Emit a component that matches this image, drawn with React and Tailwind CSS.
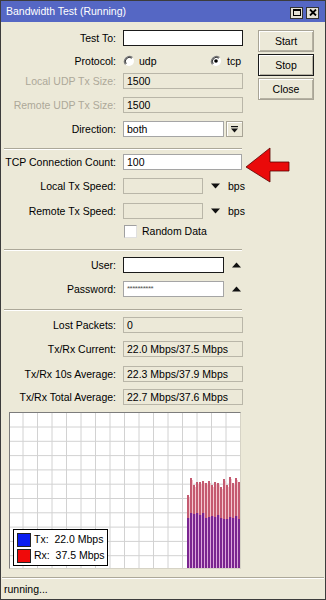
import React from 'react';

const FONT = { fontFamily: '"Liberation Sans", Arial, sans-serif' };

const rxTops = [82, 65, 72, 69, 69, 68, 70, 68, 72, 69, 70, 74, 66, 72, 64, 70, 65, 69];
const txTops = [105, 100, 101, 100, 102, 100, 105, 104, 103, 104, 102, 105, 106, 106, 104, 105, 103, 106];

const Label = ({ children, disabled }) => (
  <div className={`w-[116px] shrink-0 text-right pr-[1px] ${disabled ? 'text-[#aca899]' : 'text-black'}`}>
    {children}
  </div>
);

const Field = ({ value, variant = 'white', w = 'w-[120px]', small }) => {
  const styles = {
    white: 'bg-white border-[#a5a5a5]',
    focus: 'bg-white border-[#1a1a1a]',
    disabled: 'bg-[#ece9d8] border-[#b9b6a8]',
  };
  return (
    <div
      className={`${w} shrink-0 h-[16px] border ${styles[variant]} flex items-center pl-[3px] ${small ? 'text-[8px] text-[#555] tracking-[-0.5px]' : ''}`}
    >
      {value}
    </div>
  );
};

const Row = ({ label, disabled, className = '', children }) => (
  <div className={`flex items-center h-[16px] gap-[6px] ${className}`}>
    <Label disabled={disabled}>{label}</Label>
    {children}
  </div>
);

const Sep = ({ className = '' }) => (
  <div className={`ml-[3px] w-[238px] ${className}`}>
    <div className="h-px bg-[#aca899]" />
    <div className="h-px bg-white" />
  </div>
);

const Tri = ({ up }) => (
  <svg width="9" height="6" viewBox="0 0 9 6" className="shrink-0">
    <path d={up ? 'M0 5.5 L4.5 0.5 L9 5.5 Z' : 'M0 0.5 L9 0.5 L4.5 5.5 Z'} fill="#111" />
  </svg>
);

const Radio = ({ checked }) => (
  <svg width="12" height="12" viewBox="0 0 12 12" className="shrink-0">
    <circle cx="6" cy="6" r="5" fill="#fff" />
    <path d="M9.5 2.5 A5 5 0 0 0 2.5 9.5" fill="none" stroke="#7a7a7a" strokeWidth="1.2" />
    <path d="M8.8 3.2 A4 4 0 0 0 3.2 8.8" fill="none" stroke="#303030" strokeWidth="1" />
    {checked && <circle cx="6" cy="6" r="1.8" fill="#000" />}
  </svg>
);

const Button = ({ children, def }) => (
  <div
    className={`w-[56px] h-[22px] flex items-center justify-center bg-[#ece9d8] ${
      def ? 'border border-[#1a1a1a]' : 'border border-[#a8a496]'
    } shadow-[inset_1px_1px_0_#ffffff,inset_-1px_-1px_0_#b5b1a2]`}
  >
    {children}
  </div>
);

const Chart = () => {
  const vlines = [];
  for (let x = 13; x < 230; x += 14.5) vlines.push(x);
  const hlines = [];
  for (let y = 14; y < 155; y += 14.3) hlines.push(y);
  return (
    <div className="relative ml-[8px] mt-[7px] w-[232px] h-[157px] border border-t-[#7c7c7c] border-l-[#7c7c7c] border-r-[#d6d3c6] border-b-[#d6d3c6] bg-white">
      <svg width="230" height="155" viewBox="0 0 230 155" className="block">
        {vlines.map((x, i) => (
          <line key={`v${i}`} x1={x} y1="0" x2={x} y2="155" stroke="#d2d2d2" strokeWidth="1" />
        ))}
        {hlines.map((y, i) => (
          <line key={`h${i}`} x1="0" y1={y} x2="230" y2={y} stroke="#d2d2d2" strokeWidth="1" />
        ))}
        {rxTops.map((rt, i) => {
          const x = 177 + i * 3;
          const tt = txTops[i];
          return (
            <g key={i}>
              <rect x={x} y={rt} width="2" height={tt - rt} fill="#c45a70" />
              <rect x={x + 2} y={rt + 2} width="1" height={tt - rt - 2} fill="#f4c8ce" />
              <rect x={x} y={tt} width="2" height={155 - tt} fill="#7a2590" />
              <rect x={x + 2} y={tt} width="1" height={155 - tt} fill="#dca6dc" />
            </g>
          );
        })}
      </svg>
      <div className="absolute left-[3px] top-[116px] w-[95px] h-[37px] border border-black bg-white flex flex-col justify-center gap-[2px] pl-[3px] text-[10.5px]">
        <div className="flex items-center gap-[3px]">
          <div className="w-[14px] h-[14px] bg-[#0a1ef0] border border-[#222]" />
          <span>Tx:&nbsp;&nbsp;22.0 Mbps</span>
        </div>
        <div className="flex items-center gap-[3px]">
          <div className="w-[14px] h-[14px] bg-[#f00a0a] border border-[#222]" />
          <span>Rx:&nbsp;&nbsp;37.5 Mbps</span>
        </div>
      </div>
    </div>
  );
};

export default function App() {
  return (
    <div
      className="w-[326px] h-[600px] box-border border border-[#3c3c3c] bg-[#ece9d8] flex flex-col text-[10.5px] leading-none text-black overflow-hidden"
      style={FONT}
    >
      {/* title bar */}
      <div className="h-[21px] shrink-0 bg-[#5567c4] flex items-center justify-between pl-[5px] pr-[6px]">
        <span className="text-white text-[10.5px]">Bandwidth Test (Running)</span>
        <div className="flex items-center gap-[3px] mt-[2px]">
          <div className="w-[13px] h-[12px] bg-[#e4e1d6] border border-[#333] flex items-center justify-center">
            <div className="w-[8px] h-[7px] border border-black border-t-2" />
          </div>
          <div className="w-[13px] h-[12px] bg-[#e4e1d6] border border-[#333] flex items-center justify-center">
            <svg width="8" height="7" viewBox="0 0 8 7">
              <path d="M1 0.5 L7 6.5 M7 0.5 L1 6.5" stroke="#000" strokeWidth="1.8" />
            </svg>
          </div>
        </div>
      </div>

      {/* body */}
      <div className="flex-1 flex">
        <div className="w-[248px] shrink-0 flex flex-col">
          <Row label="Test To:" className="mt-[8px]">
            <Field variant="focus" />
          </Row>
          <Row label="Protocol:" className="mt-[7px]">
            <div className="flex items-center w-[120px] shrink-0">
              <div className="w-[87px] shrink-0 flex items-center">
                <Radio />
                <span className="ml-[4px]">udp</span>
              </div>
              <Radio checked />
              <span className="ml-[5px]">tcp</span>
            </div>
          </Row>
          <Row label="Local UDP Tx Size:" disabled className="mt-[4px]">
            <Field variant="disabled" value="1500" />
          </Row>
          <Row label="Remote UDP Tx Size:" disabled className="mt-[8px]">
            <Field variant="disabled" value="1500" />
          </Row>
          <Row label="Direction:" className="mt-[8px]">
            <div className="flex items-center gap-[2px] shrink-0">
              <Field w="w-[101px]" value="both" />
              <div className="w-[17px] h-[16px] shrink-0 border border-[#a8a496] bg-[#ece9d8] shadow-[inset_1px_1px_0_#ffffff] flex items-center justify-center">
                <svg width="7" height="7" viewBox="0 0 7 7">
                  <rect x="0" y="0" width="7" height="1.2" fill="#111" />
                  <path d="M0 2.5 L7 2.5 L3.5 6.5 Z" fill="#111" />
                </svg>
              </div>
            </div>
          </Row>

          <Sep className="mt-[11px]" />

          <Row label="TCP Connection Count:" className="mt-[4px]">
            <Field w="w-[119px]" value="100" />
            <svg width="46" height="38" viewBox="0 0 46 38" className="self-start mt-[-8px] ml-[-3px] shrink-0">
              <path
                d="M1 21 L25 2 L25 16 L44 16 L44 25 L25 25 L25 36 Z"
                fill="#ea0a0a"
                stroke="#5a0000"
                strokeWidth="0.8"
              />
            </svg>
          </Row>
          <Row label="Local Tx Speed:" className="mt-[8px]">
            <Field w="w-[80px]" variant="disabled" />
            <div className="ml-[2px] shrink-0">
              <Tri />
            </div>
            <span className="ml-[2px]">bps</span>
          </Row>
          <Row label="Remote Tx Speed:" className="mt-[9px]">
            <Field w="w-[80px]" variant="disabled" />
            <div className="ml-[2px] shrink-0">
              <Tri />
            </div>
            <span className="ml-[2px]">bps</span>
          </Row>
          <div className="flex items-center h-[16px] mt-[4px] pl-[123px]">
            <div className="w-[13px] h-[13px] shrink-0 bg-white border border-t-[#a0a0a0] border-l-[#a0a0a0] border-r-[#e0e0e0] border-b-[#e0e0e0]" />
            <span className="ml-[5px]">Random Data</span>
          </div>

          <Sep className="mt-[10px]" />

          <Row label="User:" className="mt-[6px]">
            <Field w="w-[101px]" variant="focus" />
            <div className="ml-[2px] shrink-0">
              <Tri up />
            </div>
          </Row>
          <Row label="Password:" className="mt-[8px]">
            <Field w="w-[101px]" value="**********" small />
            <div className="ml-[2px] shrink-0">
              <Tri up />
            </div>
          </Row>

          <Sep className="mt-[12px]" />

          <Row label="Lost Packets:" className="mt-[6px]">
            <Field variant="disabled" value="0" />
          </Row>
          <Row label="Tx/Rx Current:" className="mt-[8px]">
            <Field variant="disabled" value="22.0 Mbps/37.5 Mbps" />
          </Row>
          <Row label="Tx/Rx 10s Average:" className="mt-[9px]">
            <Field variant="disabled" value="22.3 Mbps/37.9 Mbps" />
          </Row>
          <Row label="Tx/Rx Total Average:" className="mt-[7px]">
            <Field variant="disabled" value="22.7 Mbps/37.6 Mbps" />
          </Row>

          <Chart />
        </div>

        <div className="flex flex-col gap-[2px] pt-[8px] ml-[9px]">
          <Button>Start</Button>
          <Button def>Stop</Button>
          <Button>Close</Button>
        </div>
      </div>

      {/* status bar */}
      <div className="h-[22px] shrink-0 flex flex-col">
        <div className="h-px bg-[#aca899] mx-[1px]" />
        <div className="h-px bg-white mx-[1px]" />
        <div className="flex-1 flex items-center pl-[3px]">running...</div>
      </div>
    </div>
  );
}
